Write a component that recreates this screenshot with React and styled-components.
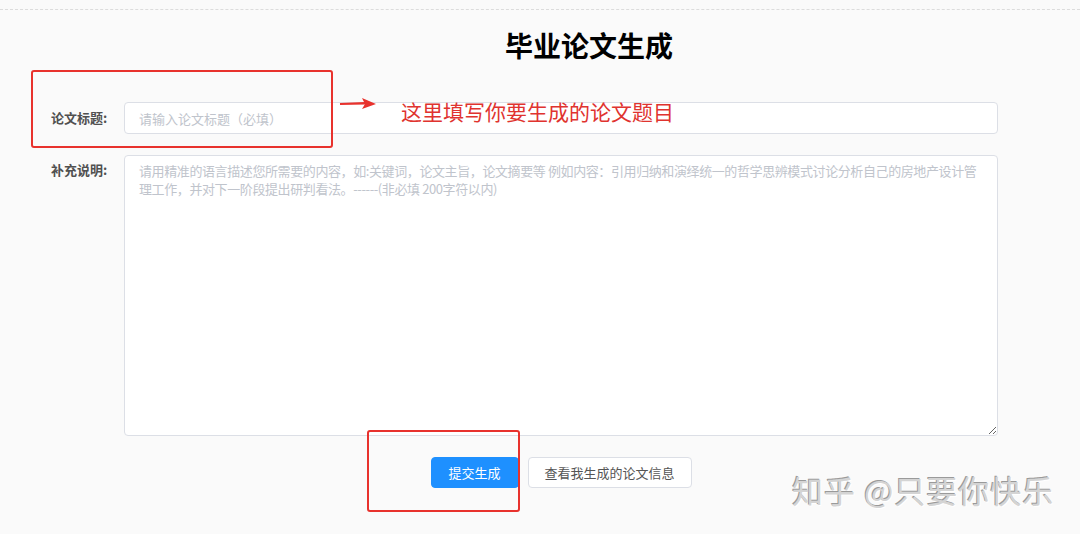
import styled, { createGlobalStyle } from "styled-components"

const GlobalStyle = createGlobalStyle`
    html, body {
        margin: 0;
        padding: 0;
        background: #fafafa;
        font-family: "Noto Sans CJK SC", "Noto Sans", sans-serif;
    }
`

const Page = styled.div`
    position: relative;
    width: 1080px;
    height: 534px;
    overflow: hidden;
    padding-top: 9px;
    box-sizing: border-box;
`

const Sheet = styled.div`
    border-top: 1px dashed #dcdcdc;
    padding-top: 17px;
`

const Title = styled.h1`
    margin: 0 0 39px;
    padding-left: 98px;
    text-align: center;
    font-size: 28px;
    line-height: 36px;
    font-weight: 700;
    color: #000;
`

const Row = styled.div`
    display: flex;
    align-items: flex-start;
    padding: 0 82px 0 51px;
    margin-bottom: ${p => p.$gap}px;
`

const Label = styled.label`
    width: 73px;
    flex-shrink: 0;
    font-size: 13px;
    font-weight: 700;
    color: #505050;
    line-height: ${p => p.$lh}px;
    padding-top: ${p => p.$pt || 0}px;
`

const Input = styled.input`
    flex: 1;
    height: 32px;
    box-sizing: border-box;
    border: 1px solid #dcdfe6;
    border-radius: 4px;
    background: #fff;
    padding: 0 14px;
    font-family: inherit;
    font-size: 13px;
    outline: none;
    &::placeholder { color: #c0c4cc; }
`

const Area = styled.textarea`
    display: block;
    flex: 1;
    height: 281px;
    box-sizing: border-box;
    border: 1px solid #dcdfe6;
    border-radius: 4px;
    background: #fff;
    padding: 6px 14px;
    font-family: inherit;
    font-size: 13px;
    line-height: 18px;
    letter-spacing: -0.4px;
    outline: none;
    &::placeholder { color: #c0c4cc; }
`

const Actions = styled.div`
    display: flex;
    justify-content: center;
    gap: 9px;
    padding-left: 124px;
    padding-right: 82px;
`

const Button = styled.button`
    display: block;
    width: ${p => p.$w}px;
    height: 31px;
    padding: 0;
    border-radius: 4px;
    font-family: inherit;
    font-size: 13px;
    cursor: pointer;
    border: 1px solid ${p => p.$primary ? "#1e90ff" : "#dcdfe6"};
    background: ${p => p.$primary ? "#1e90ff" : "#fff"};
    color: ${p => p.$primary ? "#fff" : "#555"};
`

const Mark = styled.div`
    position: absolute;
    left: ${p => p.$x}px;
    top: ${p => p.$y}px;
    width: ${p => p.$w}px;
    height: ${p => p.$h}px;
    border: 2px solid #e8322d;
    border-radius: 3px;
    box-sizing: border-box;
    pointer-events: none;
`

const Note = styled.div`
    position: absolute;
    left: 401px;
    top: 96px;
    font-size: 21px;
    line-height: 30px;
    color: #e0332f;
`

const Arrow = styled.svg`
    position: absolute;
    left: 338px;
    top: 97px;
`

const Watermark = styled.div`
    position: absolute;
    left: 792px;
    top: 470px;
    font-size: 31px;
    line-height: 40px;
    letter-spacing: 1px;
    color: #d4d4d4;
    text-shadow: -1px -1px 0 #9a9a9a, 1px 1px 0 #ffffff;
    white-space: nowrap;
`

export default function App() {
    return (
        <Page>
            <GlobalStyle />
            <Sheet>
                <Title>毕业论文生成</Title>
                <Row $gap={21}>
                    <Label $lh={32}>论文标题:</Label>
                    <Input placeholder="请输入论文标题（必填）" />
                </Row>
                <Row $gap={21}>
                    <Label $lh={18} $pt={6}>补充说明:</Label>
                    <Area placeholder="请用精准的语言描述您所需要的内容，如:关键词，论文主旨，论文摘要等 例如内容：引用归纳和演绎统一的哲学思辨模式讨论分析自己的房地产设计管理工作，并对下一阶段提出研判看法。------(非必填 200字符以内)" />
                </Row>
                <Actions>
                    <Button $primary $w={88}>提交生成</Button>
                    <Button $w={164}>查看我生成的论文信息</Button>
                </Actions>
            </Sheet>

            <Mark $x={31} $y={70} $w={302} $h={78} />
            <Arrow width="40" height="14" viewBox="0 0 40 14">
                <path d="M2 7 L26 6 L26 6.5 Z" fill="#e8322d" stroke="#e8322d" strokeWidth="2" />
                <path d="M24 1 L38 7 L24 12 L27 7 Z" fill="#e8322d" />
            </Arrow>
            <Note>这里填写你要生成的论文题目</Note>
            <Mark $x={367} $y={430} $w={153} $h={82} />

            <Watermark>知乎 @只要你快乐</Watermark>
        </Page>
    )
}
